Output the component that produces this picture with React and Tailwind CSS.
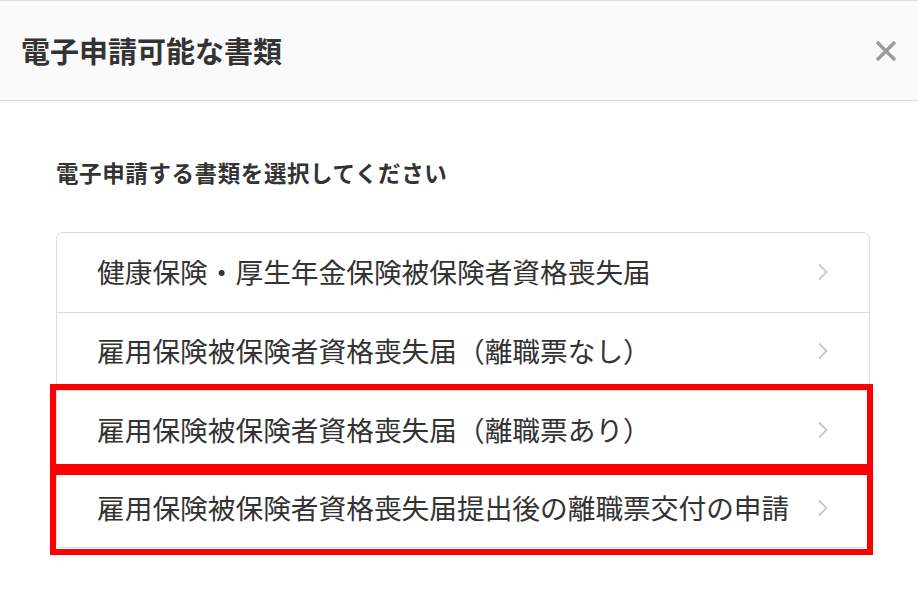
import React from "react";

const docs = [
  "健康保険・厚生年金保険被保険者資格喪失届",
  "雇用保険被保険者資格喪失届（離職票なし）",
  "雇用保険被保険者資格喪失届（離職票あり）",
  "雇用保険被保険者資格喪失届提出後の離職票交付の申請",
];

const font = {
  fontFamily: '"Noto Sans CJK JP", "Noto Sans", sans-serif',
};

function Chevron() {
  return (
    <svg width="12" height="18" viewBox="0 0 12 18" fill="none">
      <path d="M2 1.5L9.5 9L2 16.5" stroke="#c8c8c8" strokeWidth="1.8" />
    </svg>
  );
}

export default function App() {
  return (
    <div className="relative w-[918px] h-[591px] bg-white overflow-hidden" style={font}>
      <header className="flex items-center justify-between h-[101px] bg-[#fafafa] border-t border-b border-[#dedede] pl-[21px] pr-[20px]">
        <h1 className="text-[29px] font-bold text-[#333] leading-none">電子申請可能な書類</h1>
        <button className="w-[24px] h-[24px] flex items-center justify-center">
          <svg width="22" height="22" viewBox="0 0 22 22">
            <path d="M2 2L20 20M20 2L2 20" stroke="#9a9a9a" strokeWidth="3.2" />
          </svg>
        </button>
      </header>

      <div className="pt-[55px] pl-[56px] pr-[48px]">
        <p className="text-[22.5px] leading-[32px] font-bold text-[#333] tracking-[0.6px]">
          電子申請する書類を選択してください
        </p>

        <ul className="mt-[44px] border border-[#dddddd] rounded-[7px]">
          {docs.map((d, i) => (
            <li
              key={d}
              className={`flex items-center justify-between h-[78.5px] pl-[40px] pr-[40px] ${
                i > 0 ? "border-t border-[#dddddd]" : ""
              }`}
            >
              <span className="text-[27.7px] leading-none text-[#333]">{d}</span>
              <Chevron />
            </li>
          ))}
        </ul>
      </div>

      {/* highlight annotations */}
      <div className="absolute left-[50px] top-[384px] w-[823px] h-[86px] border-[6px] border-[#ff0000]" />
      <div className="absolute left-[50px] top-[469px] w-[823px] h-[86px] border-[6px] border-[#ff0000]" />
    </div>
  );
}
